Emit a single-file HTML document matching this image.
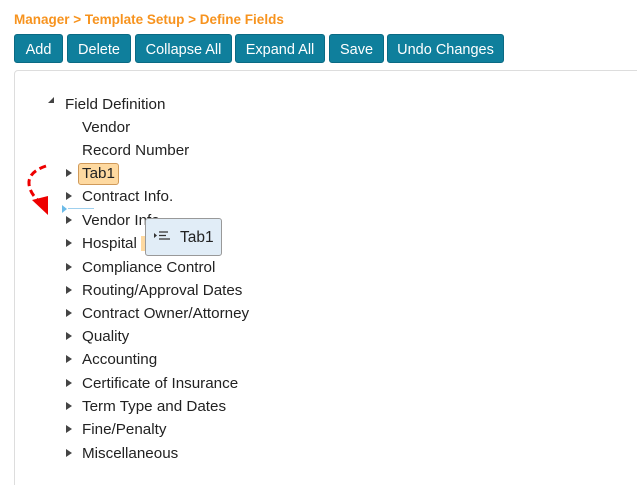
<!DOCTYPE html>
<html style="width:637px;height:485px;overflow:hidden"><head><style>
body{margin:0;width:637px;height:485px;overflow:hidden;background:#fff;font-family:"Liberation Sans",sans-serif;position:relative}
.bc{position:absolute;left:14px;top:12px;color:#f7931e;font-weight:bold;font-size:13.5px}
.b{position:absolute;top:34px;height:29px;background:#0f7f9c;border:1px solid #0a6a84;border-radius:3px;color:#fff;font-size:14.5px;line-height:30px;text-align:center;box-sizing:border-box}
.panel{position:absolute;left:14px;top:70px;width:640px;height:425px;border:1px solid #ddd;border-radius:4px}
.r{position:absolute;left:82px;font-size:15.2px;color:#222;line-height:20px}
.t{position:absolute;left:66px;width:0;height:0;border-left:6px solid #444;border-top:4px solid transparent;border-bottom:4px solid transparent}
</style></head><body>
<div class="bc">Manager &gt; Template Setup &gt; Define Fields</div>
<div class="b" style="left:14px;width:49px">Add</div>
<div class="b" style="left:67px;width:64px">Delete</div>
<div class="b" style="left:135px;width:97px">Collapse All</div>
<div class="b" style="left:235px;width:90px">Expand All</div>
<div class="b" style="left:329px;width:55px">Save</div>
<div class="b" style="left:387px;width:117px">Undo Changes</div>
<div class="panel"></div>
<div style="position:absolute;left:48px;top:97px;width:0;height:0;border-right:6px solid #444;border-top:6px solid transparent"></div>
<div class="r" style="left:65px;top:95px">Field Definition</div>
<div class="r" style="top:118px">Vendor</div>
<div class="r" style="top:141px">Record Number</div>
<div style="position:absolute;left:78px;top:163px;width:41px;height:22px;background:#fed9a0;border:1px solid #d09a5a;border-radius:3px;box-sizing:border-box"></div>
<div class="r" style="top:164px">Tab1</div>
<div class="r" style="top:187px">Contract Info.</div>
<div class="r" style="top:211px">Vendor Info</div>
<div class="r" style="top:234px">Hospital</div>
<div style="position:absolute;left:141px;top:236px;width:4px;height:15px;background:#fed9a0"></div>
<div class="r" style="top:258px">Compliance Control</div>
<div class="r" style="top:281px">Routing/Approval Dates</div>
<div class="r" style="top:304px">Contract Owner/Attorney</div>
<div class="r" style="top:327px">Quality</div>
<div class="r" style="top:350px">Accounting</div>
<div class="r" style="top:374px">Certificate of Insurance</div>
<div class="r" style="top:397px">Term Type and Dates</div>
<div class="r" style="top:420px">Fine/Penalty</div>
<div class="r" style="top:444px">Miscellaneous</div>
<div class="t" style="top:169px"></div><div class="t" style="top:192px"></div><div class="t" style="top:216px"></div><div class="t" style="top:239px"></div><div class="t" style="top:263px"></div><div class="t" style="top:286px"></div><div class="t" style="top:309px"></div><div class="t" style="top:332px"></div><div class="t" style="top:355px"></div><div class="t" style="top:379px"></div><div class="t" style="top:402px"></div><div class="t" style="top:425px"></div><div class="t" style="top:449px"></div>
<div style="position:absolute;left:62px;top:205px;width:0;height:0;border-left:5px solid #6cbbe8;border-top:4px solid transparent;border-bottom:4px solid transparent"></div>
<div style="position:absolute;left:68px;top:208px;width:26px;height:1px;background:#9fd0ee"></div>
<svg style="position:absolute;left:20px;top:160px" width="40" height="60"><path d="M26 6 Q8 12 9 24 Q10 34 20 42" fill="none" stroke="#e00" stroke-width="3" stroke-dasharray="7 4"/><path d="M12 40 L28 55 L28 36 Z" fill="#e00"/></svg>
<div style="position:absolute;left:145px;top:218px;width:77px;height:38px;background:#e1edf7;border:1px solid #999;border-radius:3px;box-sizing:border-box"></div>
<svg style="position:absolute;left:153px;top:230px" width="20" height="12"><path d="M1 3 L4 5.5 L1 8Z" fill="#333"/><path d="M6 2H15M6 5.5H13M6 9H17" stroke="#333" stroke-width="1.3"/></svg>
<div class="r" style="left:180px;top:228px;font-size:15.5px">Tab1</div>
</body></html>
